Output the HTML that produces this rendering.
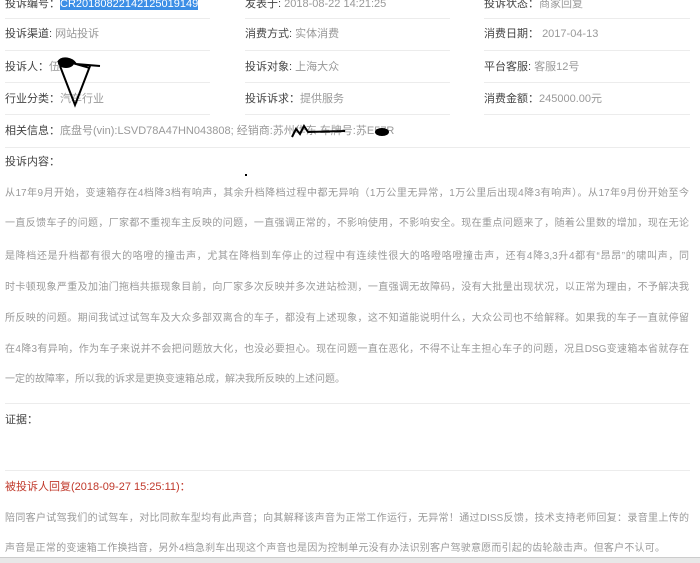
<!DOCTYPE html>
<html><head><meta charset="utf-8"><style>
body{margin:0;width:700px;height:562px;overflow:hidden;background:#fff;font-family:"Liberation Sans","Noto Sans CJK SC",sans-serif;font-size:11px;color:#444;position:relative}
.a{position:absolute;white-space:nowrap;line-height:14px}
.v{color:#999}
.hl{position:absolute;height:1px;background:#ececec}
.t{position:absolute;left:5px;width:684px;color:#999;white-space:normal;height:14px;overflow:hidden;line-height:14px;font-size:10px;text-align:justify;text-align-last:justify}
</style></head><body>
<div class="a" style="left:5px;top:-3px">投诉编号：<span style="background:#3b8ee6;color:#fff">CR20180822142125019149</span></div>
<div class="a" style="left:245px;top:-3px">发表于: <span class="v">2018-08-22 14:21:25</span></div>
<div class="a" style="left:484px;top:-3px">投诉状态：<span class="v">商家回复</span></div>

<div class="a" style="left:5px;top:27px">投诉渠道: <span class="v">网站投诉</span></div>
<div class="a" style="left:245px;top:27px">消费方式: <span class="v">实体消费</span></div>
<div class="a" style="left:484px;top:27px">消费日期： <span class="v">2017-04-13</span></div>

<div class="a" style="left:5px;top:60px">投诉人：<span class="v">伍</span></div>
<div class="a" style="left:245px;top:60px">投诉对象: <span class="v">上海大众</span></div>
<div class="a" style="left:484px;top:60px">平台客服: <span class="v">客服12号</span></div>

<div class="a" style="left:5px;top:92px">行业分类：<span class="v">汽车行业</span></div>
<div class="a" style="left:245px;top:92px">投诉诉求：<span class="v">提供服务</span></div>
<div class="a" style="left:484px;top:92px">消费金额：<span class="v">245000.00元</span></div>

<div class="a" style="left:5px;top:124px">相关信息：<span class="v">底盘号(vin):LSVD78A47HN043808; 经销商:苏州华东 车牌号:苏E57R</span></div>

<div class="hl" style="left:5px;width:205px;top:18px"></div><div class="hl" style="left:245px;width:205px;top:18px"></div><div class="hl" style="left:484px;width:206px;top:18px"></div>
<div class="hl" style="left:5px;width:205px;top:50px"></div><div class="hl" style="left:245px;width:205px;top:50px"></div><div class="hl" style="left:484px;width:206px;top:50px"></div>
<div class="hl" style="left:5px;width:205px;top:82px"></div><div class="hl" style="left:245px;width:205px;top:82px"></div><div class="hl" style="left:484px;width:206px;top:82px"></div>
<div class="hl" style="left:5px;width:205px;top:114px"></div><div class="hl" style="left:245px;width:205px;top:114px"></div><div class="hl" style="left:484px;width:206px;top:114px"></div>
<div class="hl" style="left:5px;width:685px;top:147px"></div>

<svg style="position:absolute;left:0;top:0" width="700" height="200">
<path d="M58 62 C62 56,72 58,76 64 L100 66 M60 66 L75 105 L90 66 M62 60 L90 68" stroke="#000" stroke-width="2" fill="none"/>
<ellipse cx="66" cy="63" rx="8" ry="5" fill="#000"/>
<path d="M292 137 L296 129 L300 134 L304 126 L308 132 L345 131" stroke="#000" stroke-width="2" fill="none"/>
<ellipse cx="382" cy="132" rx="7" ry="4" fill="#000"/>
<rect x="245" y="174" width="2" height="2" fill="#000"/>
</svg>

<div class="a" style="left:5px;top:155px">投诉内容：</div>
<div class="t" style="top:187px">从17年9月开始，变速箱存在4档降3档有响声，其余升档降档过程中都无异响（1万公里无异常，1万公里后出现4降3有响声）。从17年9月份开始至今</div>
<div class="t" style="top:217px">一直反馈车子的问题，厂家都不重视车主反映的问题，一直强调正常的，不影响使用，不影响安全。现在重点问题来了，随着公里数的增加，现在无论</div>
<div class="t" style="top:250px">是降档还是升档都有很大的咯噔的撞击声，尤其在降档到车停止的过程中有连续性很大的咯噔咯噔撞击声，还有4降3,3升4都有“昂昂”的啸叫声，同</div>
<div class="t" style="top:281px">时卡顿现象严重及加油门拖档共振现象目前，向厂家多次反映并多次进站检测，一直强调无故障码，没有大批量出现状况，以正常为理由，不予解决我</div>
<div class="t" style="top:312px">所反映的问题。期间我试过试驾车及大众多部双离合的车子，都没有上述现象，这不知道能说明什么，大众公司也不给解释。如果我的车子一直就停留</div>
<div class="t" style="top:343px">在4降3有异响，作为车子来说并不会把问题放大化，也没必要担心。现在问题一直在恶化，不得不让车主担心车子的问题，况且DSG变速箱本省就存在</div>
<div class="t" style="top:373px;text-align-last:left">一定的故障率，所以我的诉求是更换变速箱总成，解决我所反映的上述问题。</div>

<div class="hl" style="left:5px;width:685px;top:403px"></div>
<div class="a" style="left:5px;top:413px">证据：</div>
<div class="hl" style="left:5px;width:685px;top:470px"></div>
<div class="a" style="left:5px;top:480px;color:#c0392b">被投诉人回复(2018-09-27 15:25:11)：</div>
<div class="t" style="top:512px">陪同客户试驾我们的试驾车，对比同款车型均有此声音；向其解释该声音为正常工作运行，无异常！通过DISS反馈，技术支持老师回复：录音里上传的</div>
<div class="t" style="top:542px;width:660px">声音是正常的变速箱工作换挡音，另外4档急刹车出现这个声音也是因为控制单元没有办法识别客户驾驶意愿而引起的齿轮敲击声。但客户不认可。</div>
<div style="position:absolute;left:0;top:557px;width:700px;height:5px;background:#e8e8e8;border-top:1px solid #ccc"></div>
</body></html>
